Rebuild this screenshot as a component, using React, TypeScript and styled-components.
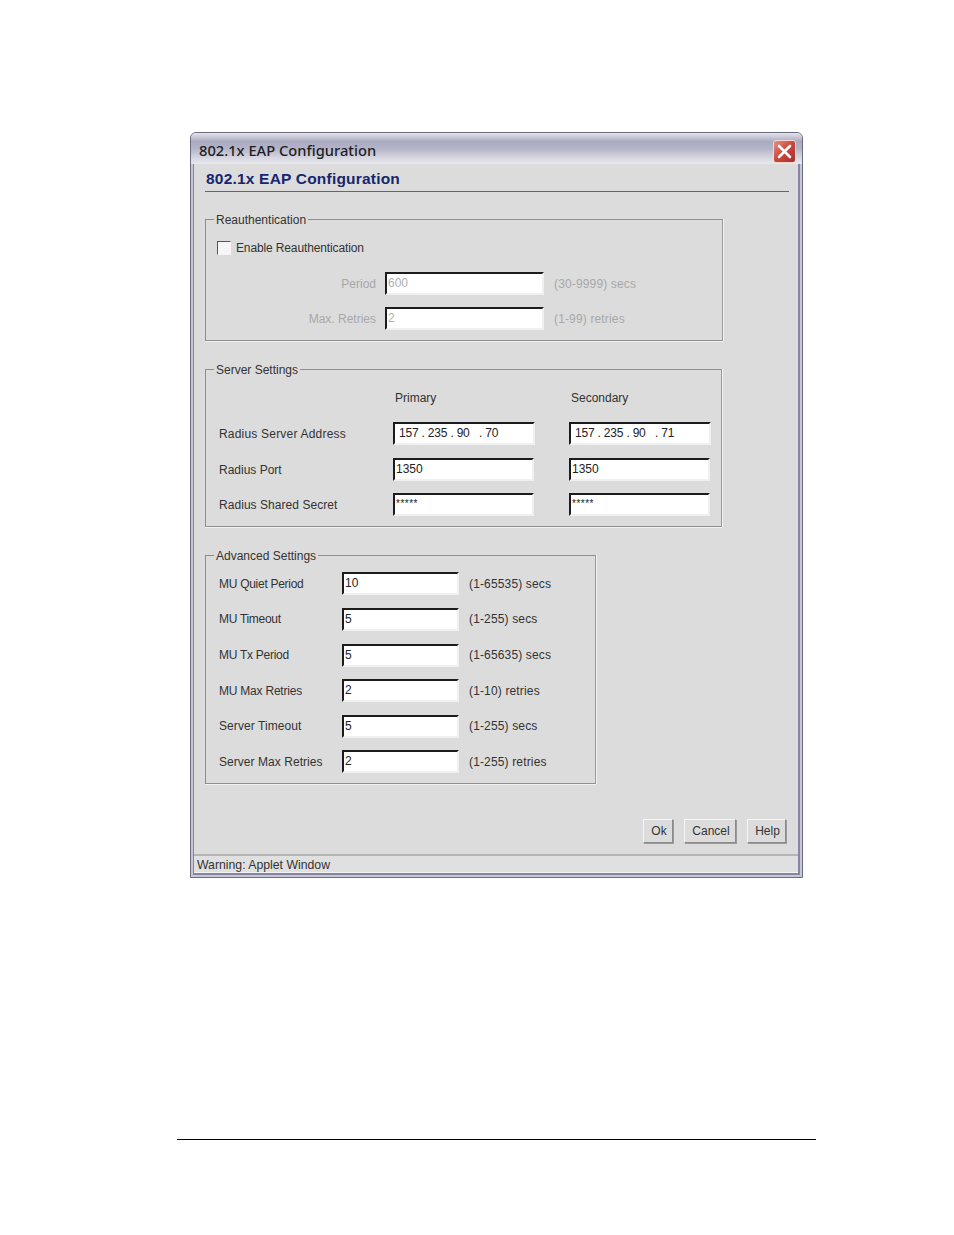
import React from "react"
import styled, { createGlobalStyle } from "styled-components"

const GlobalStyle = createGlobalStyle`
  html, body {
    margin: 0;
    padding: 0;
    background: #fff;
  }
  body {
    font-family: "Liberation Sans", Arial, sans-serif;
    font-size: 12px;
    color: #2a2a2a;
  }
`

const Page = styled.div`
  width: 954px;
  height: 1235px;
  box-sizing: border-box;
  padding: 132px 0 0 190px;
  display: flex;
  flex-direction: column;
  overflow: hidden;
`

const Window = styled.div`
  width: 613px;
  height: 746px;
  box-sizing: border-box;
  display: flex;
  flex-direction: column;
  border: 1px solid #6c6c80;
  border-radius: 6px 6px 0 0;
  background: #c6c6d6;
  padding: 0 2px 2px;
`

const TitleBar = styled.div`
  height: 31px;
  flex: none;
  margin: 0 -2px;
  box-sizing: border-box;
  padding: 0 6px 1px 8px;
  display: flex;
  align-items: flex-end;
  justify-content: space-between;
  border-radius: 5px 5px 0 0;
  background: linear-gradient(#e4e4ec 0, #a9a9c0 28%, #b4b4c9 50%, #d8d8e2 82%, #e8e8ee 100%);
`

const TitleText = styled.span`
  font-family: "Noto Sans", "DejaVu Sans", sans-serif;
  font-size: 14.7px;
  font-weight: 500;
  line-height: 20px;
  margin-bottom: 3px;
  color: #1e1e1e;
`

const CloseButton = styled.div`
  width: 23px;
  height: 23px;
  box-sizing: border-box;
  border: 1px solid #f0d8d0;
  border-radius: 3px;
  background: linear-gradient(135deg, #e89080 0, #c9463c 50%, #a9302c 100%);
  display: flex;
  align-items: center;
  justify-content: center;
`

const Body = styled.div`
  flex: 1;
  display: flex;
  flex-direction: column;
  background: #dcdcdc;
  border: 1px solid #8686a0;
  border-width: 0 2px 2px 1px;
  min-height: 0;
`

const Heading = styled.h1`
  margin: 0 9px 0 11px;
  height: 28px;
  flex: none;
  box-sizing: border-box;
  padding: 6px 0 0 1px;
  border-bottom: 1px solid #3f6f9f;
  font-size: 15.5px;
  line-height: 17px;
  font-weight: bold;
  color: #15266e;
  letter-spacing: 0.2px;
`

const Group = styled.fieldset<{ $width: number; $height: number; $top: number }>`
  width: ${({ $width }) => $width}px;
  height: ${({ $height }) => $height}px;
  flex: none;
  box-sizing: border-box;
  margin: ${({ $top }) => $top}px 0 0 11px;
  padding: 0 0 0 13px;
  border: 1px solid #8e8e8e;
  border-right-color: #9a9a9a;
  box-shadow: 0 1px 0 #f2f2f2, 1px 0 0 #f2f2f2;
  min-width: 0;
`

const GroupLabel = styled.legend`
  margin-left: -5px;
  padding: 2px 2px 0;
  font-size: 12px;
  line-height: 14px;
  color: #333;
`

const CheckRow = styled.label`
  display: flex;
  align-items: center;
  gap: 5px;
  margin: 13px 0 0 -2px;
  height: 16px;
  color: #333;
  letter-spacing: -0.13px;
`

const CheckBox = styled.span`
  width: 14px;
  height: 14px;
  box-sizing: border-box;
  background: #f6f6f6;
  border: 1px solid #f4f4f4;
  border-top-color: #555;
  border-left-color: #555;
`

const DisabledRow = styled.div<{ $top: number }>`
  display: flex;
  align-items: center;
  height: 23px;
  margin-top: ${({ $top }) => $top}px;
  padding-left: 77px;
`

const DisabledLabel = styled.span`
  width: 80px;
  margin-right: 9px;
  text-align: right;
  color: #a8a8a8;
  white-space: nowrap;
`

const Field = styled.div<{ $width: number; $muted?: boolean; $inset?: number }>`
  width: ${({ $width }) => $width}px;
  height: 23px;
  flex: none;
  box-sizing: border-box;
  background: #fff;
  border: 2px solid #f0f0f0;
  border-top-color: #1c1c1c;
  border-left-color: #1c1c1c;
  padding: 2px 0 0 ${({ $inset }) => $inset ?? 1}px;
  font-size: 12px;
  line-height: 14px;
  color: ${({ $muted }) => ($muted ? "#b0b0b0" : "#222")};
  white-space: pre;
  display: flex;
  align-items: flex-start;
`

const AddressField = styled(Field)`
  letter-spacing: -0.2px;
`

const Hint = styled.span<{ $muted?: boolean }>`
  margin-left: 10px;
  color: ${({ $muted }) => ($muted ? "#a8a8a8" : "#333")};
  letter-spacing: 0.15px;
  white-space: nowrap;
`

const ServerHead = styled.div`
  display: flex;
  height: 14px;
  margin-top: 14px;
  padding-left: 176px;
  color: #333;
`

const ServerHeadCell = styled.span`
  flex: none;
  width: 176px;
`

const ServerRow = styled.div<{ $top: number }>`
  display: grid;
  grid-template-columns: 174px 142px 34px 142px;
  align-items: center;
  height: 23px;
  margin-top: ${({ $top }) => $top}px;
`

const RowLabel = styled.span<{ $track?: number }>`
  color: #333;
  white-space: nowrap;
  letter-spacing: ${({ $track }) => $track ?? 0}px;
`

const AdvancedList = styled.div`
  display: flex;
  flex-direction: column;
  gap: 12.6px;
  margin-top: 9.4px;
`

const AdvancedRow = styled.div`
  display: grid;
  grid-template-columns: 123px 117px auto;
  align-items: center;
  height: 23px;
`

const Stars = styled.span`
  margin-top: 2px;
  font-size: 10px;
  line-height: 10px;
  letter-spacing: 0.5px;
`

const Footer = styled.div`
  flex: 1;
  display: flex;
  justify-content: flex-end;
  align-items: flex-start;
  gap: 11px;
  padding: 35px 12px 0 0;
`

const ActionButton = styled.button<{ $width: number }>`
  width: ${({ $width }) => $width}px;
  height: 24px;
  box-sizing: border-box;
  padding: 0 0 0 2px;
  border: 1px solid #8a8a8a;
  border-top-color: #f6f6f6;
  border-left-color: #f6f6f6;
  box-shadow: 1px 1px 0 #9a9a9a;
  background: #dcdcdc;
  font-family: inherit;
  font-size: 12px;
  color: #333;
`

const StatusBar = styled.div`
  height: 19px;
  flex: none;
  box-sizing: border-box;
  border-top: 2px solid #b4b4b4;
  border-bottom: 1px solid #f4f4f4;
  padding: 2px 0 0 3px;
  background: #e0e0e0;
  font-size: 12.25px;
  line-height: 14px;
  color: #333;
`

const Rule = styled.hr`
  width: 639px;
  height: 1px;
  margin: 261px 0 0 -13px;
  border: none;
  background: #000;
`

const advanced = [
  { label: "MU Quiet Period", value: "10", hint: "(1-65535) secs", track: -0.28 },
  { label: "MU Timeout", value: "5", hint: "(1-255) secs", track: -0.3 },
  { label: "MU Tx Period", value: "5", hint: "(1-65635) secs", track: -0.27 },
  { label: "MU Max Retries", value: "2", hint: "(1-10) retries", track: -0.22 },
  { label: "Server Timeout", value: "5", hint: "(1-255) secs", track: 0.07 },
  { label: "Server Max Retries", value: "2", hint: "(1-255) retries", track: 0.05 },
]

const App = () => (
  <Page>
    <GlobalStyle />
    <Window>
      <TitleBar>
        <TitleText>802.1x EAP Configuration</TitleText>
        <CloseButton>
          <svg width="15" height="15" viewBox="0 0 15 15">
            <path d="M2 2 L13 13 M13 2 L2 13" stroke="#fff" strokeWidth="2.6" strokeLinecap="round" />
          </svg>
        </CloseButton>
      </TitleBar>
      <Body>
        <Heading>802.1x EAP Configuration</Heading>
        <Group $width={518} $height={130} $top={19}>
          <GroupLabel>Reauthentication</GroupLabel>
          <CheckRow>
            <CheckBox />
            Enable Reauthentication
          </CheckRow>
          <DisabledRow $top={16}>
            <DisabledLabel>Period</DisabledLabel>
            <Field $width={159} $muted>600</Field>
            <Hint $muted>(30-9999) secs</Hint>
          </DisabledRow>
          <DisabledRow $top={12}>
            <DisabledLabel>Max. Retries</DisabledLabel>
            <Field $width={159} $muted>2</Field>
            <Hint $muted>(1-99) retries</Hint>
          </DisabledRow>
        </Group>
        <Group $width={517} $height={166} $top={20}>
          <GroupLabel>Server Settings</GroupLabel>
          <ServerHead>
            <ServerHeadCell>Primary</ServerHeadCell>
            <ServerHeadCell>Secondary</ServerHeadCell>
          </ServerHead>
          <ServerRow $top={17}>
            <RowLabel $track={0.2}>Radius Server Address</RowLabel>
            <AddressField $width={142} $inset={4}>157 . 235 . 90   . 70</AddressField>
            <span />
            <AddressField $width={142} $inset={4}>157 . 235 . 90   . 71</AddressField>
          </ServerRow>
          <ServerRow $top={13}>
            <RowLabel>Radius Port</RowLabel>
            <Field $width={141}>1350</Field>
            <span />
            <Field $width={141}>1350</Field>
          </ServerRow>
          <ServerRow $top={12}>
            <RowLabel $track={0.05}>Radius Shared Secret</RowLabel>
            <Field $width={141}><Stars>*****</Stars></Field>
            <span />
            <Field $width={141}><Stars>*****</Stars></Field>
          </ServerRow>
        </Group>
        <Group $width={391} $height={237} $top={20}>
          <GroupLabel>Advanced Settings</GroupLabel>
          <AdvancedList>
            {advanced.map(({ label, value, hint, track }) => (
              <AdvancedRow key={label}>
                <RowLabel $track={track}>{label}</RowLabel>
                <Field $width={117}>{value}</Field>
                <Hint>{hint}</Hint>
              </AdvancedRow>
            ))}
          </AdvancedList>
        </Group>
        <Footer>
          <ActionButton $width={30}>Ok</ActionButton>
          <ActionButton $width={52}>Cancel</ActionButton>
          <ActionButton $width={39}>Help</ActionButton>
        </Footer>
        <StatusBar>Warning: Applet Window</StatusBar>
      </Body>
    </Window>
    <Rule />
  </Page>
)

export default App
